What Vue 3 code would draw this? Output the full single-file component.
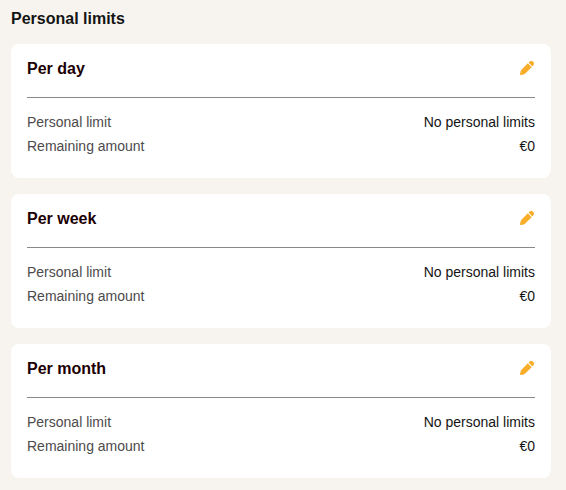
<script setup>
const limits = [
  { id: 'day', title: 'Per day', limit: 'No personal limits', remaining: '€0' },
  { id: 'week', title: 'Per week', limit: 'No personal limits', remaining: '€0' },
  { id: 'month', title: 'Per month', limit: 'No personal limits', remaining: '€0' },
]
</script>

<template>
  <main class="page">
    <h1 class="heading">Personal limits</h1>
    <section v-for="item in limits" :key="item.id" class="card">
      <header class="card-header">
        <h2 class="card-title">{{ item.title }}</h2>
        <button class="edit" type="button" :aria-label="`Edit limit ${item.title.toLowerCase()}`">
          <svg class="icon" viewBox="0 0 14 14" aria-hidden="true">
            <path d="M7.8 2.3 L11.7 6.2 L5.5 12.3 Q4.7 13.1 3.6 13.4 L1 14 Q-.1 14.1 0 13 L.6 10.4 Q.9 9.3 1.7 8.5 Z" />
            <path d="M8.5 1.6 L9.4 .8 Q11.4 -.9 13.2 .8 Q14.9 2.6 13.2 4.6 L12.4 5.5 Z" />
          </svg>
        </button>
      </header>
      <dl class="rows">
        <div class="row">
          <dt>Personal limit</dt>
          <dd>{{ item.limit }}</dd>
        </div>
        <div class="row">
          <dt>Remaining amount</dt>
          <dd>{{ item.remaining }}</dd>
        </div>
      </dl>
    </section>
  </main>
</template>

<style>
body {
  margin: 0;
  background: #f7f4ef;
}
</style>

<style scoped>
.page {
  display: flex;
  flex-direction: column;
  gap: 16px;
  padding: 10px 15px 12px 11px;
  font-family: "Liberation Sans", Arial, sans-serif;
  color: #141414;
}

.heading,
.card-title {
  margin: 0;
  font-size: 16px;
  line-height: 18px;
  font-weight: 700;
}

.card {
  padding: 16px 16px 20px;
  border-radius: 8px;
  background: #fff;
}

.card-header {
  display: flex;
  align-items: flex-start;
  justify-content: space-between;
  padding-bottom: 19px;
  border-bottom: 1px solid #8b888a;
}

.card-title {
  color: #1c0004;
}

.edit {
  display: flex;
  padding: 1px;
  border: 0;
  background: none;
  color: #f9ae2b;
  cursor: pointer;
}

.icon {
  width: 14px;
  height: 14px;
  fill: currentColor;
}

.rows {
  margin: 12px 0 0;
  font-size: 14px;
  line-height: 24px;
}

.row {
  display: flex;
  justify-content: space-between;
}

dt {
  color: #4d4a4b;
}

dd {
  margin: 0;
}
</style>
